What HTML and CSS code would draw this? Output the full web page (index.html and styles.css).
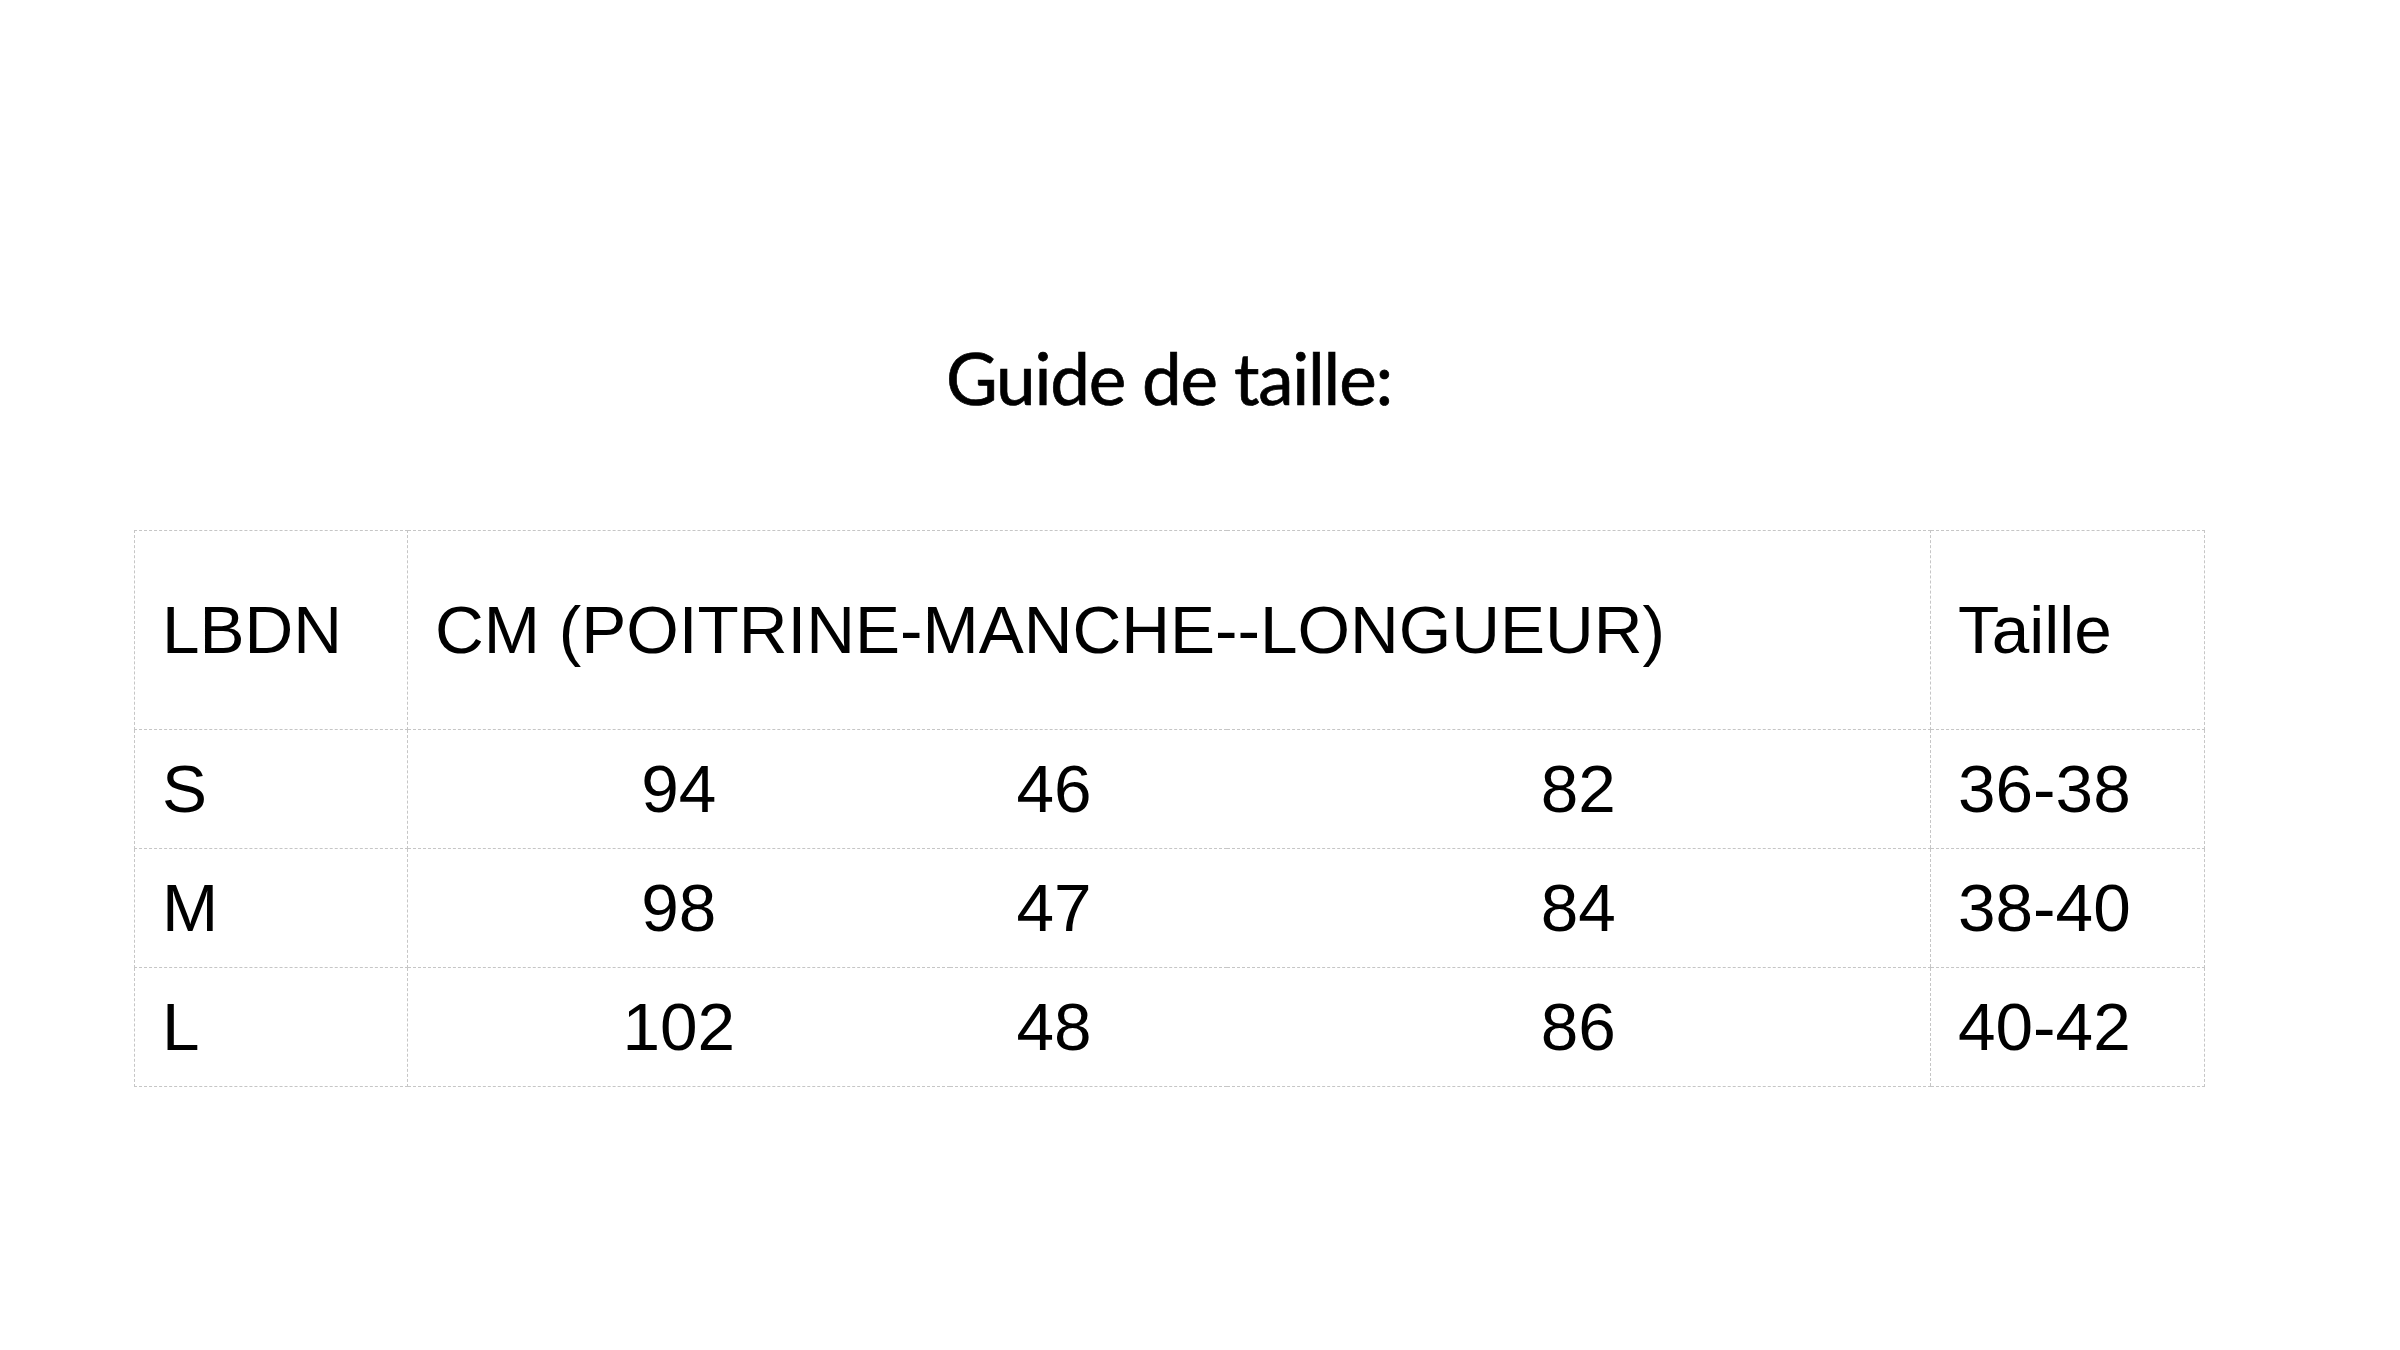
FILE: index.html
```html
<!DOCTYPE html>
<html lang="fr">
<head>
<meta charset="utf-8">
<title>Guide de taille</title>
<link rel="stylesheet" href="styles.css">
</head>
<body>
<main class="page">
  <h1 class="title">Guide de taille:</h1>
  <table class="sizes">
    <colgroup>
      <col class="c-lbdn">
      <col class="c-m1">
      <col class="c-m2">
      <col class="c-m3">
      <col class="c-taille">
    </colgroup>
    <thead>
      <tr class="head">
        <th class="cell left">LBDN</th>
        <th class="cell left" colspan="3">CM (POITRINE-MANCHE--LONGUEUR)</th>
        <th class="cell left">Taille</th>
      </tr>
    </thead>
    <tbody>
      <tr class="row">
        <td class="cell left">S</td>
        <td class="cell mid m1">94</td>
        <td class="cell mid m2">46</td>
        <td class="cell mid m3">82</td>
        <td class="cell left">36-38</td>
      </tr>
      <tr class="row">
        <td class="cell left">M</td>
        <td class="cell mid m1">98</td>
        <td class="cell mid m2">47</td>
        <td class="cell mid m3">84</td>
        <td class="cell left">38-40</td>
      </tr>
      <tr class="row">
        <td class="cell left">L</td>
        <td class="cell mid m1">102</td>
        <td class="cell mid m2">48</td>
        <td class="cell mid m3">86</td>
        <td class="cell left">40-42</td>
      </tr>
    </tbody>
  </table>
</main>
</body>
</html>
```

FILE: styles.css
```css
html, body {
  margin: 0;
  padding: 0;
  background: #ffffff;
}

.page {
  width: 2070px;
  margin: 0 0 0 134px;
  padding-top: 343px;
}

.title {
  margin: 0 0 117px 0;
  font-family: "Lato", "Open Sans", sans-serif;
  font-weight: 400;
  font-size: 71px;
  line-height: 70px;
  text-align: center;
  color: #000;
  letter-spacing: -1.2px;
  -webkit-text-stroke: 0.7px #000;
}

.sizes {
  width: 2070px;
  table-layout: fixed;
  border-collapse: collapse;
  font-family: "Liberation Sans", Arial, sans-serif;
  font-size: 67.5px;
  color: #000;
}

.c-lbdn { width: 273px; }
.c-m1 { width: 542px; }
.c-m2 { width: 277px; }
.c-m3 { width: 704px; }
.c-taille { width: 274px; }

.cell {
  border: 1px dashed #c6c6c6;
  font-weight: 400;
  vertical-align: middle;
  padding: 0 0 0 27px;
  white-space: nowrap;
  line-height: 1;
}

.left { text-align: left; }

.head { height: 199px; }
.row { height: 119px; }

.mid {
  border-left: none;
  border-right: none;
}

.m1 { text-align: center; padding: 0; }
.m2 { text-align: left; padding: 0 0 0 67px; }
.m3 { text-align: center; padding: 0; }
```
